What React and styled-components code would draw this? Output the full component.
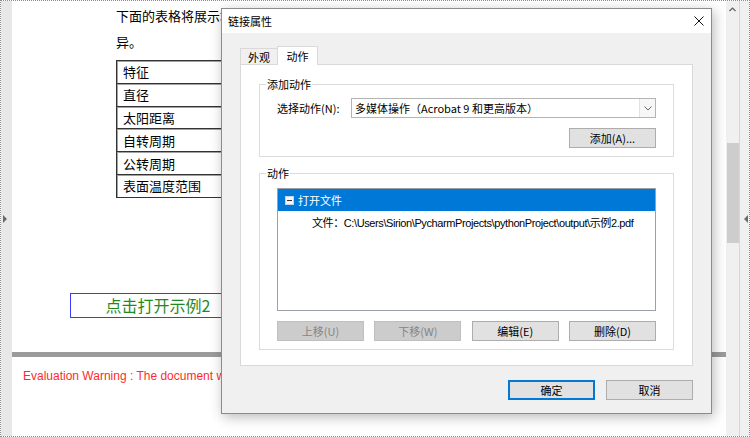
import React from 'react';
import styled, { createGlobalStyle } from 'styled-components';

const GlobalStyle = createGlobalStyle`
  html, body {
    margin: 0;
    padding: 0;
    background: #fff;
  }
  body {
    width: 750px;
    height: 437px;
    overflow: hidden;
    font-family: "Noto Sans CJK SC", sans-serif;
  }
`;

const Screen = styled.div`
  position: relative;
  width: 750px;
  height: 437px;
  box-sizing: border-box;
  border: 1px dotted #8a8a8a;
  display: flex;
  overflow: hidden;
`;

const Rail = styled.div`
  flex-shrink: 0;
  width: ${({ $w }) => $w}px;
  background: ${({ $bg }) => $bg};
  display: flex;
  align-items: center;
  justify-content: center;
`;

const Arrow = styled.span`
  width: 0;
  height: 0;
  border-top: 4px solid transparent;
  border-bottom: 4px solid transparent;
  ${({ $dir }) =>
    $dir === 'right'
      ? 'border-left: 4px solid #6a6a6a; margin-left: -3px;'
      : 'border-right: 4px solid #6a6a6a; margin-left: 3px;'}
`;

/* ---------- document page (partly under the dialog) ---------- */

const Page = styled.div`
  flex: 1;
  background: #fff;
  padding-top: 2px;
  display: flex;
  flex-direction: column;
  font-family: "Noto Sans CJK SC", sans-serif;
  font-size: 13px;
  color: #000;
`;

const Intro = styled.div`
  padding-left: 104px;
  line-height: 26px;
  white-space: nowrap;
`;

const Table = styled.div`
  margin: 5px 0 0 104px;
  width: 320px;
  border-left: 1px solid #333;
  border-bottom: 1px solid #333;
`;

const Row = styled.div`
  height: 22.8px;
  box-sizing: border-box;
  border-top: 1px solid #333;
  box-shadow: inset 1px 1px 0 #a2a2a2;
  display: flex;
  align-items: center;
  padding-left: 6px;
`;

const LinkBox = styled.div`
  margin: 95px 0 0 58px;
  width: 176px;
  height: 25px;
  box-sizing: border-box;
  border: 1px solid #3b3bff;
  text-align: center;
  font-size: 16px;
  line-height: 22px;
  color: #1f8a1f;
`;

const Divider = styled.div`
  margin-top: 34px;
  height: 5px;
  background: #9b9b9b;
`;

const Warning = styled.div`
  margin-top: 12px;
  padding-left: 11px;
  font-family: "Liberation Sans", Arial, sans-serif;
  font-size: 12px;
  line-height: 14px;
  color: #ff2b2b;
  white-space: nowrap;
`;

/* ---------- scrollbar ---------- */

const ScrollTrack = styled.div`
  flex-shrink: 0;
  width: 13px;
  border-right: 1px solid #d6d6d6;
  background: #f0f0f0;
  display: flex;
  flex-direction: column;
  align-items: center;
`;

const Thumb = styled.div`
  margin-top: 131px;
  width: 12px;
  height: 100px;
  background: #cdcdcd;
`;

/* ---------- dialog ---------- */

const Dialog = styled.div`
  position: absolute;
  left: 220px;
  top: 7px;
  width: 491px;
  height: 406px;
  box-sizing: border-box;
  border: 1px solid #8c8c8c;
  box-shadow: 2px 3px 12px rgba(0, 0, 0, 0.28);
  display: flex;
  flex-direction: column;
  font-family: "Noto Sans CJK SC", sans-serif;
  font-size: 11px;
  color: #000;
`;

const TitleBar = styled.div`
  height: 24px;
  background: #fff;
  display: flex;
  align-items: center;
  justify-content: space-between;
  padding: 0 7px 0 6px;
`;

const Body = styled.div`
  flex: 1;
  background: #f0f0f0;
  padding: 13px 18px 0;
`;

const TabRow = styled.div`
  display: flex;
  align-items: flex-end;
  height: 18px;
`;

const Tab = styled.div`
  position: relative;
  box-sizing: border-box;
  border: 1px solid #d9d9d9;
  border-bottom: none;
  display: flex;
  align-items: center;
  justify-content: center;
  ${({ $active }) =>
    $active
      ? 'width: 41px; height: 19px; margin: 0 0 -1px -1px; background: #fff; z-index: 1; padding-bottom: 1px;'
      : 'width: 38px; height: 16px; background: #f0f0f0;'}
`;

const Panel = styled.div`
  height: 302px;
  box-sizing: border-box;
  border: 1px solid #d9d9d9;
  background: #fff;
  padding: 19px 18px 0;
`;

const Group = styled.div`
  position: relative;
  box-sizing: border-box;
  height: ${({ $h }) => $h}px;
  margin-top: ${({ $mt }) => $mt || 0}px;
  border: 1px solid #dcdcdc;
  padding: ${({ $pt }) => $pt}px 17px 0;
`;

const Legend = styled.span`
  position: absolute;
  top: -8px;
  left: 6px;
  padding: 0 1px;
  background: #fff;
  line-height: 14px;
`;

const SelectRow = styled.div`
  display: flex;
  align-items: center;
  justify-content: space-between;
  height: 20px;
`;

const Select = styled.div`
  width: 305px;
  height: 20px;
  box-sizing: border-box;
  border: 1px solid #b4b4b4;
  background: #fff;
  display: flex;
  align-items: center;
`;

const SelectText = styled.span`
  flex: 1;
  padding-left: 3px;
  white-space: nowrap;
`;

const DropButton = styled.span`
  width: 15px;
  height: 100%;
  border-left: 1px solid #e2e2e2;
  background: #f7f7f7;
  display: flex;
  align-items: center;
  justify-content: center;
`;

const ButtonRow = styled.div`
  display: flex;
  justify-content: ${({ $justify }) => $justify || 'flex-end'};
  margin-top: ${({ $mt }) => $mt}px;
`;

const Button = styled.div`
  width: 87px;
  height: 20px;
  box-sizing: border-box;
  display: flex;
  align-items: center;
  justify-content: center;
  border: 1px solid ${({ $disabled, $primary }) => ($primary ? '#0078d7' : $disabled ? '#bfbfbf' : '#adadad')};
  background: ${({ $disabled }) => ($disabled ? '#cccccc' : '#e1e1e1')};
  color: ${({ $disabled }) => ($disabled ? '#858585' : '#000')};
  box-shadow: ${({ $primary }) => ($primary ? 'inset 0 0 0 1px #0078d7' : 'none')};
`;

const ListBox = styled.div`
  margin-top: 14px;
  height: 123px;
  box-sizing: border-box;
  border: 1px solid #9ca0a8;
  background: #fff;
`;

const ListItem = styled.div`
  height: 22px;
  display: flex;
  align-items: center;
  white-space: nowrap;
  padding-left: ${({ $indent }) => $indent}px;
  background: ${({ $selected }) => ($selected ? '#0078d7' : 'transparent')};
  color: ${({ $selected }) => ($selected ? '#fff' : '#000')};
  gap: 4px;
`;

const FilePath = styled.span`
  font-family: "Liberation Sans", "Noto Sans CJK SC", sans-serif;
  letter-spacing: -0.4px;
`;

const Footer = styled.div`
  display: flex;
  justify-content: flex-end;
  gap: 11px;
  margin-top: 14px;
`;

const tableRows = ['特征', '直径', '太阳距离', '自转周期', '公转周期', '表面温度范围'];

const CloseIcon = () => (
  <svg width="10" height="10" viewBox="0 0 10 10">
    <path d="M0.5 0.5 L9.5 9.5 M9.5 0.5 L0.5 9.5" stroke="#111" strokeWidth="1" />
  </svg>
);

const Chevron = () => (
  <svg width="8" height="5" viewBox="0 0 8 5">
    <path d="M0.5 0.5 L4 4 L7.5 0.5" stroke="#666" strokeWidth="1" fill="none" />
  </svg>
);

const UpArrow = () => (
  <svg width="7" height="5" viewBox="0 0 7 5" style={{ marginTop: 6 }}>
    <path d="M0.5 4 L3.5 1 L6.5 4" stroke="#606060" strokeWidth="1.2" fill="none" />
  </svg>
);

const CollapseIcon = () => (
  <svg width="9" height="9" viewBox="0 0 9 9">
    <rect x="0.5" y="0.5" width="8" height="8" fill="#f2f4f7" stroke="#c9d3de" />
    <path d="M2 4.5 H7" stroke="#333" strokeWidth="1" />
  </svg>
);

const App = () => (
  <>
    <GlobalStyle />
    <Screen>
      <Rail $w={11} $bg="#e8e8e8">
        <Arrow $dir="right" />
      </Rail>

      <Page>
        <Intro>
          下面的表格将展示地球与火星在几个主要特征上的差
          <br />
          异。
        </Intro>
        <Table>
          {tableRows.map((label) => (
            <Row key={label}>{label}</Row>
          ))}
        </Table>
        <LinkBox>点击打开示例2</LinkBox>
        <Divider />
        <Warning>Evaluation Warning : The document was created with Spire.PDF for Python.</Warning>
      </Page>

      <ScrollTrack>
        <UpArrow />
        <Thumb />
      </ScrollTrack>
      <Rail $w={9} $bg="#f0f0f0">
        <Arrow $dir="left" />
      </Rail>

      <Dialog>
        <TitleBar>
          <span>链接属性</span>
          <CloseIcon />
        </TitleBar>
        <Body>
          <TabRow>
            <Tab>外观</Tab>
            <Tab $active>动作</Tab>
          </TabRow>
          <Panel>
            <Group $h={73} $pt={13}>
              <Legend>添加动作</Legend>
              <SelectRow>
                <span>选择动作(N):</span>
                <Select>
                  <SelectText>多媒体操作（Acrobat 9 和更高版本）</SelectText>
                  <DropButton>
                    <Chevron />
                  </DropButton>
                </Select>
              </SelectRow>
              <ButtonRow $mt={10}>
                <Button>添加(A)...</Button>
              </ButtonRow>
            </Group>

            <Group $h={177} $mt={16} $pt={0}>
              <Legend>动作</Legend>
              <ListBox>
                <ListItem $selected $indent={7}>
                  <CollapseIcon />
                  <span>打开文件</span>
                </ListItem>
                <ListItem $indent={34}>
                  <FilePath>文件：C:\Users\Sirion\PycharmProjects\pythonProject\output\示例2.pdf</FilePath>
                </ListItem>
              </ListBox>
              <ButtonRow $justify="space-between" $mt={10}>
                <Button $disabled>上移(U)</Button>
                <Button $disabled>下移(W)</Button>
                <Button>编辑(E)</Button>
                <Button>删除(D)</Button>
              </ButtonRow>
            </Group>
          </Panel>
          <Footer>
            <Button $primary>确定</Button>
            <Button>取消</Button>
          </Footer>
        </Body>
      </Dialog>
    </Screen>
  </>
);

export default App;
